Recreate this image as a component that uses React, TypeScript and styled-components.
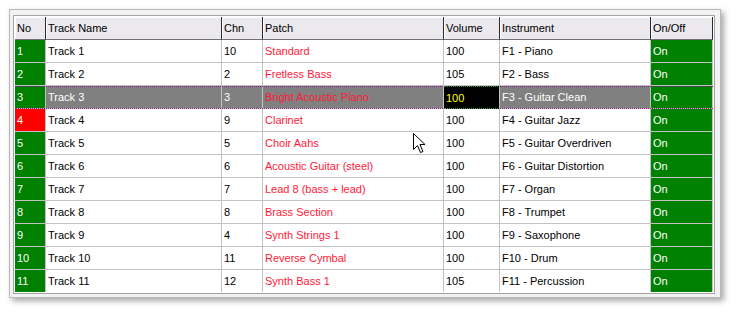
import React from "react";
import styled, { createGlobalStyle, css } from "styled-components";

const GlobalStyle = createGlobalStyle`
  body {
    margin: 0;
    background: #ffffff;
    font-family: "Liberation Sans", Arial, sans-serif;
  }
`;

const Page = styled.div`
  position: relative;
  width: 736px;
  height: 313px;
  padding: 9px 0 0 9px;
  box-sizing: border-box;
`;

const Frame = styled.div`
  width: 712px;
  box-sizing: border-box;
  padding: 5px 5px 3px 3px;
  background: #f2f2f2;
  border: 1px solid #b9b9b9;
  box-shadow: 3px 3px 6px rgba(0, 0, 0, 0.35);
`;

const GridBox = styled.div`
  border: 1px solid #a4a4a4;
  padding: 1px;
  background: #ffffff;
`;

const Grid = styled.div`
  width: 698px;
  height: 275px;
  overflow: hidden;
  font-size: 11px;
`;

const COLS = "31px 176px 41px 181px 56px 151px 62px";

const Row = styled.div<{ $selected?: boolean }>`
  position: relative;
  display: grid;
  grid-template-columns: ${COLS};
  height: 23px;
  ${(p) =>
    p.$selected &&
    css`
      &::after {
        content: "";
        position: absolute;
        inset: 0;
        border-top: 1px dotted #8a1a8a;
        border-bottom: 1px dotted #8a1a8a;
        pointer-events: none;
      }
    `}
`;

const HeadCell = styled.div`
  box-sizing: border-box;
  display: flex;
  align-items: center;
  padding-left: 2px;
  background: #ebe9ee;
  color: #000;
  border-right: 1px solid #2a2a2a;
  border-bottom: 1px solid #707070;
  box-shadow: inset 1px 1px 0 #ffffff;
  white-space: nowrap;
`;

type Tone = "plain" | "green" | "red" | "patch" | "focus";

const Cell = styled.div<{ $tone?: Tone; $selected?: boolean }>`
  box-sizing: border-box;
  display: flex;
  align-items: center;
  padding-left: 2px;
  border-right: 1px solid #c2c2c2;
  border-bottom: 1px solid #c2c2c2;
  white-space: nowrap;
  overflow: hidden;
  background: ${(p) => (p.$selected ? "#808080" : "#ffffff")};
  color: ${(p) => (p.$selected ? "#ffffff" : "#000000")};
  ${(p) =>
    p.$tone === "green" &&
    css`
      background: #008000;
      color: #ffffff;
    `}
  ${(p) =>
    p.$tone === "red" &&
    css`
      background: #ff0000;
      color: #ffffff;
    `}
  ${(p) =>
    p.$tone === "patch" &&
    css`
      color: #ff1a3a;
    `}
  ${(p) =>
    p.$tone === "focus" &&
    css`
      position: relative;
      z-index: 1;
      background: #000000;
      color: #ffff00;
      border-top: 1px dotted #3aa03a;
      border-bottom: 1px dotted #3aa03a;
    `}
`;

const Pointer = styled.svg`
  position: absolute;
  left: 413px;
  top: 133px;
  width: 13px;
  height: 21px;
`;

type Track = {
  no: number;
  name: string;
  chn: number;
  patch: string;
  volume: number;
  instrument: string;
};

const tracks: Track[] = [
  { no: 1, name: "Track 1", chn: 10, patch: "Standard", volume: 100, instrument: "F1 - Piano" },
  { no: 2, name: "Track 2", chn: 2, patch: "Fretless Bass", volume: 105, instrument: "F2 - Bass" },
  { no: 3, name: "Track 3", chn: 3, patch: "Bright Acoustic Piano", volume: 100, instrument: "F3 - Guitar Clean" },
  { no: 4, name: "Track 4", chn: 9, patch: "Clarinet", volume: 100, instrument: "F4 - Guitar Jazz" },
  { no: 5, name: "Track 5", chn: 5, patch: "Choir Aahs", volume: 100, instrument: "F5 - Guitar Overdriven" },
  { no: 6, name: "Track 6", chn: 6, patch: "Acoustic Guitar (steel)", volume: 100, instrument: "F6 - Guitar Distortion" },
  { no: 7, name: "Track 7", chn: 7, patch: "Lead 8 (bass + lead)", volume: 100, instrument: "F7 - Organ" },
  { no: 8, name: "Track 8", chn: 8, patch: "Brass Section", volume: 100, instrument: "F8 - Trumpet" },
  { no: 9, name: "Track 9", chn: 4, patch: "Synth Strings 1", volume: 100, instrument: "F9 - Saxophone" },
  { no: 10, name: "Track 10", chn: 11, patch: "Reverse Cymbal", volume: 100, instrument: "F10 - Drum" },
  { no: 11, name: "Track 11", chn: 12, patch: "Synth Bass 1", volume: 105, instrument: "F11 - Percussion" },
];

const headers = ["No", "Track Name", "Chn", "Patch", "Volume", "Instrument", "On/Off"];

const SELECTED = 3;
const MUTED_NO = 4;

export default function App() {
  return (
    <Page>
      <GlobalStyle />
      <Frame>
        <GridBox>
          <Grid>
            <Row>
              {headers.map((h) => (
                <HeadCell key={h}>{h}</HeadCell>
              ))}
            </Row>
            {tracks.map((t) => {
              const sel = t.no === SELECTED;
              return (
                <Row key={t.no} $selected={sel}>
                  <Cell $tone={t.no === MUTED_NO ? "red" : "green"}>{t.no}</Cell>
                  <Cell $selected={sel}>{t.name}</Cell>
                  <Cell $selected={sel}>{t.chn}</Cell>
                  <Cell $selected={sel} $tone="patch">
                    {t.patch}
                  </Cell>
                  <Cell $selected={sel} $tone={sel ? "focus" : "plain"}>
                    {t.volume}
                  </Cell>
                  <Cell $selected={sel}>{t.instrument}</Cell>
                  <Cell $tone="green">On</Cell>
                </Row>
              );
            })}
          </Grid>
        </GridBox>
      </Frame>
      <Pointer viewBox="0 0 13 21">
        <path
          d="M0.5 0.5 L0.5 16.5 L4.5 12.5 L7.5 19.5 L10 18.5 L7 11.5 L12 11.5 Z"
          fill="#ffffff"
          stroke="#000000"
          strokeWidth="1"
          strokeLinejoin="miter"
        />
      </Pointer>
    </Page>
  );
}
